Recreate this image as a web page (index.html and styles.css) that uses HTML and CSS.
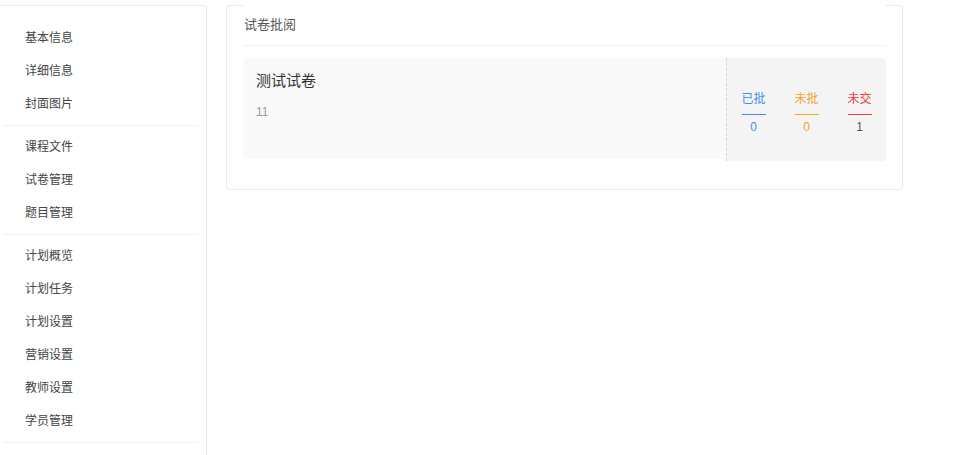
FILE: index.html
```html
<!DOCTYPE html>
<html lang="zh-CN">
<head>
<meta charset="utf-8">
<title>试卷批阅</title>
<link rel="stylesheet" href="styles.css">
</head>
<body>
<div class="layout">
  <aside class="sidebar">
    <ul class="menu-group">
      <li class="menu-item">基本信息</li>
      <li class="menu-item">详细信息</li>
      <li class="menu-item">封面图片</li>
    </ul>
    <ul class="menu-group">
      <li class="menu-item">课程文件</li>
      <li class="menu-item">试卷管理</li>
      <li class="menu-item">题目管理</li>
    </ul>
    <ul class="menu-group">
      <li class="menu-item">计划概览</li>
      <li class="menu-item">计划任务</li>
      <li class="menu-item">计划设置</li>
      <li class="menu-item">营销设置</li>
      <li class="menu-item">教师设置</li>
      <li class="menu-item">学员管理</li>
    </ul>
  </aside>
  <main class="card">
    <div class="card-header">试卷批阅</div>
    <div class="paper">
      <div class="paper-info">
        <div class="paper-title">测试试卷</div>
        <div class="paper-desc">11</div>
      </div>
      <div class="paper-stats">
        <div class="stat stat-done">
          <div class="stat-label">已批</div>
          <div class="stat-num">0</div>
        </div>
        <div class="stat stat-todo">
          <div class="stat-label">未批</div>
          <div class="stat-num">0</div>
        </div>
        <div class="stat stat-none">
          <div class="stat-label">未交</div>
          <div class="stat-num">1</div>
        </div>
      </div>
    </div>
  </main>
</div>
</body>
</html>
```
FILE: styles.css
```css
* { box-sizing: border-box; }
html, body { margin: 0; padding: 0; background: #fff; }
body {
  font-family: "Liberation Sans", "Noto Sans CJK SC", sans-serif;
  font-size: 12px;
  color: #333;
  padding-top: 5px;
  overflow: hidden;
  height: 455px;
}
.layout {
  display: flex;
  align-items: flex-start;
  gap: 19px;
}
.sidebar {
  width: 207px;
  flex: none;
  border: 1px solid #e3eaf1;
  border-left: none;
  border-bottom: none;
  border-top-right-radius: 4px;
  padding-top: 11px;
  min-height: 460px;
}
.menu-group {
  list-style: none;
  margin: 0 8px 0 3px;
  padding: 4px 0 5px;
  border-bottom: 1px solid #eef0f2;
}
.menu-item {
  height: 33px;
  padding-top: 2px;
  line-height: 31px;
  padding-left: 22px;
  font-size: 12px;
  color: #444;
}
.card {
  width: 677px;
  flex: none;
  border: 1px solid #e3eaf1;
  border-radius: 4px;
  padding: 0 16px 28px;
}
.card-header {
  margin-top: -1px;
  border-top: 1px solid #fff;
  height: 41px;
  line-height: 37px;
  font-size: 13px;
  color: #555;
  border-bottom: 1px solid #eef0f2;
  padding-left: 1px;
  margin-bottom: 12px;
}
.paper {
  display: flex;
  align-items: flex-start;
}
.paper-info {
  flex: 1;
  height: 101px;
  background: #f9f9f9;
  border-radius: 3px 0 0 3px;
  padding: 13px 13px 12px;
}
.paper-title {
  font-size: 15px;
  line-height: 20px;
  color: #333;
}
.paper-desc {
  margin-top: 12px;
  font-size: 12px;
  line-height: 18px;
  color: #999;
}
.paper-stats {
  width: 160px;
  height: 103px;
  background: #f4f4f4;
  border-left: 1px dashed #d6d6d6;
  border-radius: 0 4px 4px 0;
  display: flex;
  padding-top: 32px;
}
.stat {
  flex: 1;
  display: flex;
  flex-direction: column;
  align-items: center;
}
.stat-label {
  width: 24px;
  text-align: center;
  font-size: 12px;
  line-height: 18px;
  padding-bottom: 6px;
  border-bottom: 1px solid;
  white-space: nowrap;
}
.stat-num {
  margin-top: 3px;
  font-size: 12px;
  line-height: 18px;
}
.stat-done .stat-label { color: #3f8ff0; border-bottom-color: #3f8ff0; }
.stat-done .stat-num { color: #3f8ff0; }
.stat-todo .stat-label { color: #f7a32c; border-bottom-color: #f7a32c; }
.stat-todo .stat-num { color: #f7a32c; }
.stat-none .stat-label { color: #ee3b3b; border-bottom-color: #ee3b3b; }
.stat-none .stat-num { color: #555; }
```
